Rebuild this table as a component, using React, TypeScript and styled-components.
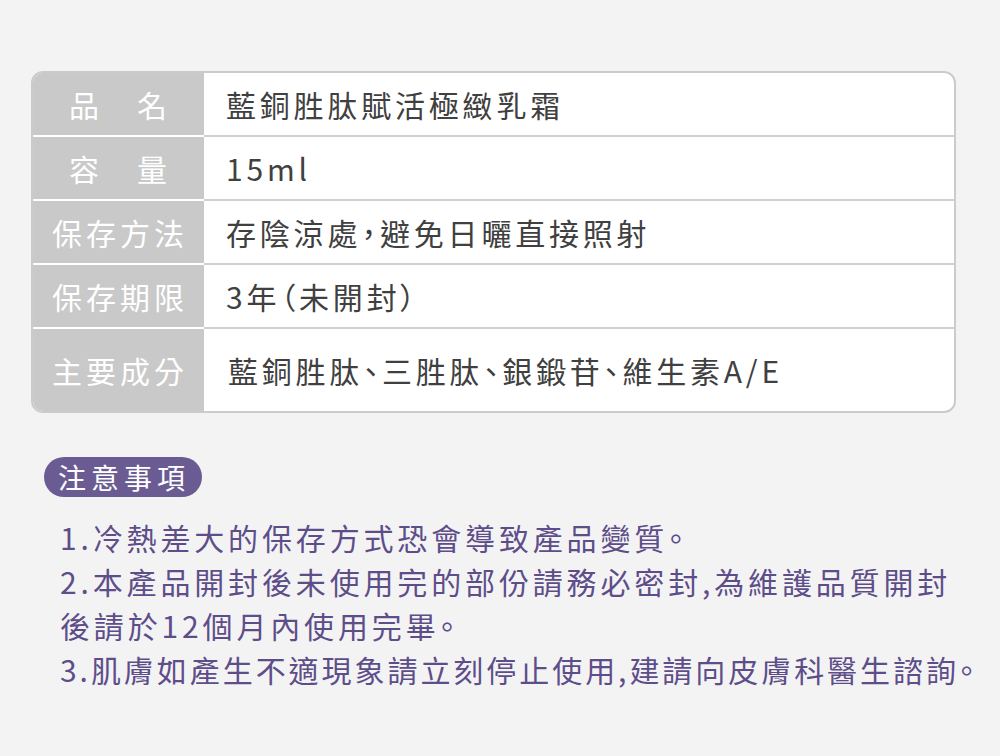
import React from 'react';
import styled, { createGlobalStyle } from 'styled-components';

const GlobalStyle = createGlobalStyle`
  html, body {
    margin: 0;
    padding: 0;
    background: #f4f3f4;
  }
  body {
    font-family: "Noto Sans CJK TC", "Noto Sans", sans-serif;
    font-feature-settings: "palt";
  }
`;

const Page = styled.div`
  width: 1000px;
  height: 756px;
  box-sizing: border-box;
  padding: 71px 44px 0 31px;
  background: #f4f3f4;
`;

const Table = styled.div`
  display: grid;
  grid-template-columns: 171px 1fr;
  border: 2px solid #cbcbcb;
  border-radius: 12px;
  overflow: hidden;
  background: #ffffff;
`;

const Label = styled.div<{ $tall?: boolean; $last?: boolean }>`
  height: ${({ $tall }) => ($tall ? 82 : 62)}px;
  display: flex;
  align-items: center;
  justify-content: center;
  background: #c9c9c9;
  color: #ffffff;
  font-size: 30px;
  letter-spacing: 4px;
  padding-left: 3px;
  border-bottom: ${({ $last }) => ($last ? 'none' : '2px solid #ffffff')};
`;

const Value = styled.div<{ $tall?: boolean; $last?: boolean }>`
  height: ${({ $tall }) => ($tall ? 82 : 62)}px;
  display: flex;
  align-items: center;
  padding-left: ${({ $tall }) => ($tall ? 24 : 22)}px;
  color: #404040;
  font-size: 30px;
  letter-spacing: 3.8px;
  border-bottom: ${({ $last }) => ($last ? 'none' : '2px solid #d0d0d0')};
`;

const Notes = styled.div`
  margin-top: 44px;
  padding-left: 13px;
`;

const Badge = styled.div`
  display: inline-flex;
  align-items: center;
  height: 40px;
  padding: 0 12px 0 14px;
  border-radius: 20px;
  background: #6a5b93;
  color: #ffffff;
  font-size: 28px;
  letter-spacing: 5px;
`;

const NoteList = styled.div`
  margin-top: 18px;
  padding-left: 16px;
  color: #5d4e8a;
  font-size: 30px;
  line-height: 44px;
`;

const NoteLine = styled.div<{ $spacing: number }>`
  white-space: nowrap;
  letter-spacing: ${({ $spacing }) => $spacing}px;
`;

const rows = [
  { label: '品　名', value: '藍銅胜肽賦活極緻乳霜' },
  { label: '容　量', value: '15ml' },
  { label: '保存方法', value: '存陰涼處，避免日曬直接照射' },
  { label: '保存期限', value: '3年（未開封）' },
  { label: '主要成分', value: '藍銅胜肽、三胜肽、銀鍛苷、維生素A/E', tall: true },
];

const notes = [
  { text: '1.冷熱差大的保存方式恐會導致產品變質。', spacing: 3.85 },
  { text: '2.本產品開封後未使用完的部份請務必密封,為維護品質開封', spacing: 3.85 },
  { text: '後請於12個月內使用完畢。', spacing: 3.85 },
  { text: '3.肌膚如產生不適現象請立刻停止使用,建請向皮膚科醫生諮詢。', spacing: 2.95 },
];

const App: React.FC = () => (
  <Page>
    <GlobalStyle />
    <Table>
      {rows.map((r, i) => (
        <React.Fragment key={r.label}>
          <Label $tall={r.tall} $last={i === rows.length - 1}>{r.label}</Label>
          <Value $tall={r.tall} $last={i === rows.length - 1}>{r.value}</Value>
        </React.Fragment>
      ))}
    </Table>
    <Notes>
      <Badge>注意事項</Badge>
      <NoteList>
        {notes.map((n) => (
          <NoteLine key={n.text} $spacing={n.spacing}>{n.text}</NoteLine>
        ))}
      </NoteList>
    </Notes>
  </Page>
);

export default App;
